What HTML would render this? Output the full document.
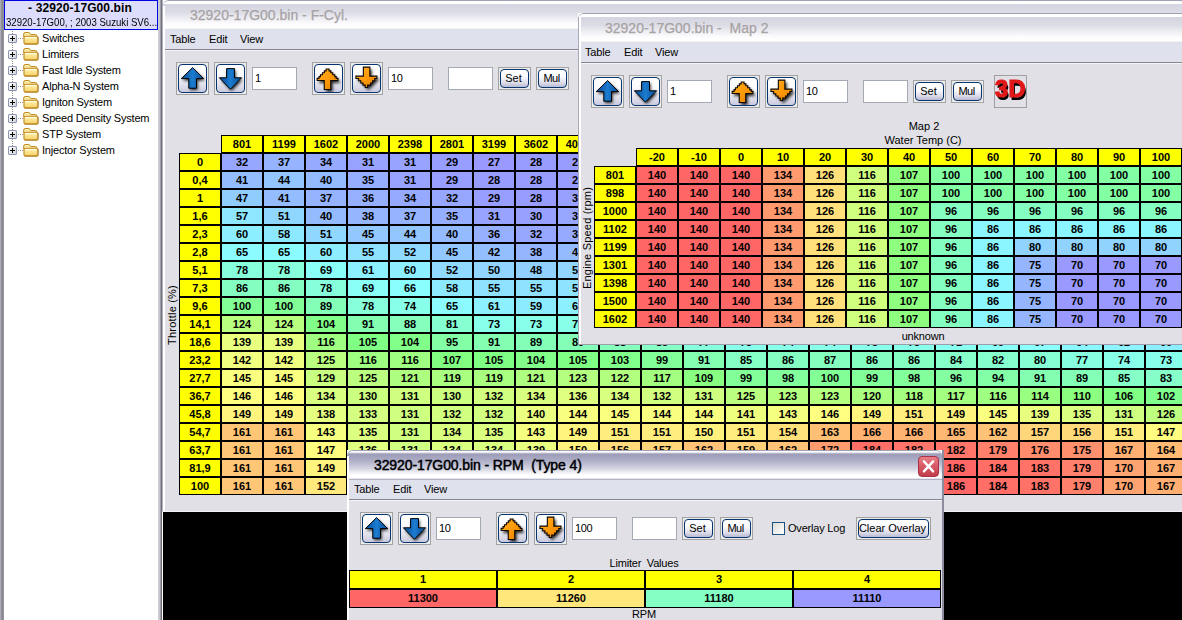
<!DOCTYPE html>
<html><head><meta charset="utf-8"><title>32920-17G00.bin</title>
<style>
html,body{margin:0;padding:0}
body{width:1182px;height:620px;overflow:hidden;position:relative;background:#e4e4ec;font-family:"Liberation Sans",sans-serif;font-size:11px;color:#000}
div,span{box-sizing:border-box}
#left{position:absolute;left:0;top:0;width:163px;height:620px;background:linear-gradient(90deg,#b6b6be 0,#92929c 1.5px,#7e7e8a 3.4px,#fff 4px);background-origin:border-box;border-left:4px solid transparent;}
#left .edge{position:absolute;left:154px;top:0;width:5px;height:620px;background:linear-gradient(90deg,#d0d0d8 0,#c2c2ca 2.3px,#787882 2.7px,#6e6e78 3.8px,#fff 4.1px)}
#hdr{z-index:2;position:absolute;left:0;top:0;width:154px;height:30px;background:#dcdcfc;border:1px solid #0000e0;text-align:center}
#hdr b{position:absolute;left:-1px;width:152px;top:0px;letter-spacing:.1px;font-size:12px;line-height:15px;font-weight:bold;white-space:nowrap}
#hdr i{position:absolute;left:-6px;width:164px;top:15px;font-size:10.5px;transform:scaleX(.915);line-height:13px;font-style:normal;white-space:nowrap}
.ti{position:absolute;left:0;height:16px;width:154px;white-space:nowrap}
.ti .pm{position:absolute;left:4px;top:4px;width:9px;height:9px;border:1px solid #8c98ac;border-radius:1px;background:linear-gradient(135deg,#fff,#d0d0d8)}
.ti .pm:before{content:"";position:absolute;left:1px;top:3px;width:5px;height:1px;background:#000}
.ti .pm:after{content:"";position:absolute;left:3px;top:1px;width:1px;height:5px;background:#000}
.ti .dl{position:absolute;left:14px;top:8px;width:5px;border-top:1px dotted #909090}
.ti .vl{position:absolute;left:8px;top:-3px;height:7px;border-left:1px dotted #909090}
.ti svg{position:absolute;left:19px;top:1px}
.ti .tx{position:absolute;left:38px;top:1px;line-height:15px;font-size:11px;letter-spacing:-.2px}
.win{position:absolute;background:#e1e0e6;overflow:hidden;border-left:1px solid #b0b0c0}
.win:before{content:'';position:absolute;left:0;top:0;width:6px;height:6px;background:#fff}
.win{border-bottom:1px solid #9c9caa}
.win .lw{position:absolute;left:0;top:6px;width:2px;bottom:0;background:#fff;z-index:3}
#fcyl{border-bottom-color:#f2f2f6}
#map2{clip-path:inset(0 0 0 1px)}
#map2 .lw{left:0;width:3px;border-left:1px solid #a8a8b8;top:4px}
#map2:before{left:0}
.win.act{border-right:2px solid #8c8c9e;border-left:0}
.win.act:after{content:'';position:absolute;right:0;top:0;width:6px;height:6px;background:#fff}
.win.act .tb{border-radius:6px 6px 0 0;z-index:1}
.win .tb{position:absolute;left:0;top:0;right:0;height:30px;border-top:1px solid #a0a0b2;border-radius:6px 0 0 0;background:linear-gradient(180deg,#fff 0,#fff 2.5px,#d6d6e2 3.5px,#dcdce6 11px,#fafafc 22px,#fff 25px,#fff 27px,#d4d4e0 29px)}
.win.act .tb{background:linear-gradient(180deg,#fff 0,#fff 1px,#9c9cb8 3px,#acacc6 9px,#d6d6e2 18px,#fff 24px,#fff 27px,#9a9ab6 29px)}
.win .tt{position:absolute;left:27px;top:5px;font-size:14px;line-height:18px;color:#a8a3a4;-webkit-text-stroke:.25px #a8a3a4;white-space:nowrap;letter-spacing:0}
.win.act .tt{color:#000;letter-spacing:-.1px;-webkit-text-stroke:.3px #000;text-shadow:0 0 1px #5a5a7a}
.win .mb{position:absolute;left:1px;top:30px;right:0;height:20px;background:#dfe1ec;border-bottom:1px solid #85858f}
.win .mb span{position:absolute;top:2px;line-height:15px;font-size:11px;letter-spacing:-.15px}
.win .ct{position:absolute;left:0;top:50px;right:0;bottom:0;border-left:2px solid #fff;border-top:1px solid #f4f4f8}
.c{position:absolute;border:1px solid #000;font-weight:bold;font-size:11px;line-height:16px;text-align:center;overflow:hidden;white-space:nowrap}
.bb{position:absolute;width:33px;height:33px;border:1px solid #a2a2a2;background:#ececec;padding:1px}
.bi{width:29px;height:29px;border:1px solid #05346e;border-radius:4px;background:linear-gradient(180deg,#fff 0,#fbfbfd 35%,#e4e4ee 70%,#cacade 100%);position:relative;overflow:hidden}
.ic{position:absolute;left:-1px;top:-1px;width:29px;height:29px}
.inp{position:absolute;width:45px;height:23px;background:#fff;border:1px solid #a4aab4;font-size:11px;line-height:21px;padding-left:2px;letter-spacing:-.4px}
.sb{position:absolute;height:23px;border:1px solid #a2a2a2;background:#ececec;padding:1px}
.si{width:100%;height:19px;border:1px solid #05346e;border-radius:4px;background:linear-gradient(180deg,#fff 0,#fafafd 40%,#dcdcea 75%,#babad2 100%);text-align:center;font-size:11px;line-height:17px;white-space:nowrap;text-indent:-2px}
.lbl{position:absolute;white-space:nowrap;font-size:11px;line-height:13px;text-align:center;letter-spacing:-.2px}
.vlbl{position:absolute;white-space:nowrap;font-size:11px;line-height:13px;letter-spacing:.2px;transform:translate(-50%,-50%) rotate(-90deg)}
.close{position:absolute;right:3px;top:5px;width:21px;height:21px;border-radius:4px;border:1px solid #a83048;background:linear-gradient(180deg,#e88088 0,#d85c66 45%,#c23c4c 100%)}
.close svg{position:absolute;left:-1px;top:-1px}
.d3{position:absolute;left:0;top:0px;width:31px;text-align:center;font-size:23px;line-height:26px;font-weight:bold;color:#e01818;-webkit-text-stroke:1.2px #e01818;text-shadow:1.5px 2.5px 0 #000;transform:scaleX(1.02);letter-spacing:.5px}
.cb{position:absolute;width:13px;height:13px;border:1px solid #1c5180;background:linear-gradient(135deg,#dcdcd7,#fff)}
</style></head>
<body>
<div id="left"><div class="edge"></div><div id="hdr"><b>- 32920-17G00.bin</b><i>32920-17G00, ; 2003 Suzuki SV6...</i></div>
<div class="ti" style="top:30px"><span class="vl"></span><span class="pm"></span><span class="dl"></span><svg width="18" height="15" viewBox="0 0 18 15"><defs><linearGradient id="fg" x1="0" y1="0" x2="0" y2="1"><stop offset="0" stop-color="#fff6bc"/><stop offset="1" stop-color="#f6d062"/></linearGradient></defs><path d="M2 13.5 L13.8 13.5 Q15.7 13.3 15.6 11.3 L15.6 6" stroke="#8c6a1c" stroke-width="1" fill="none" opacity=".55"/><path d="M.7 6 L.7 3 Q.7 1.5 2.2 1.5 L5.4 1.5 Q6.8 1.5 7.4 2.8 L7.9 3.6 L12.6 3.6 Q13.8 3.6 13.8 4.8 L13.8 6 Z" fill="#fbeaa4" stroke="#bf8a22" stroke-width="1"/><rect x="1" y="5.2" width="13.7" height="7.7" rx="1.3" fill="url(#fg)" stroke="#bf8a22" stroke-width="1.1"/><path d="M2.2 6.6 L14 6.6" stroke="#fffce4" stroke-width="1"/></svg><span class="tx">Switches</span></div>
<div class="ti" style="top:46px"><span class="vl"></span><span class="pm"></span><span class="dl"></span><svg width="18" height="15" viewBox="0 0 18 15"><defs><linearGradient id="fg" x1="0" y1="0" x2="0" y2="1"><stop offset="0" stop-color="#fff6bc"/><stop offset="1" stop-color="#f6d062"/></linearGradient></defs><path d="M2 13.5 L13.8 13.5 Q15.7 13.3 15.6 11.3 L15.6 6" stroke="#8c6a1c" stroke-width="1" fill="none" opacity=".55"/><path d="M.7 6 L.7 3 Q.7 1.5 2.2 1.5 L5.4 1.5 Q6.8 1.5 7.4 2.8 L7.9 3.6 L12.6 3.6 Q13.8 3.6 13.8 4.8 L13.8 6 Z" fill="#fbeaa4" stroke="#bf8a22" stroke-width="1"/><rect x="1" y="5.2" width="13.7" height="7.7" rx="1.3" fill="url(#fg)" stroke="#bf8a22" stroke-width="1.1"/><path d="M2.2 6.6 L14 6.6" stroke="#fffce4" stroke-width="1"/></svg><span class="tx">Limiters</span></div>
<div class="ti" style="top:62px"><span class="vl"></span><span class="pm"></span><span class="dl"></span><svg width="18" height="15" viewBox="0 0 18 15"><defs><linearGradient id="fg" x1="0" y1="0" x2="0" y2="1"><stop offset="0" stop-color="#fff6bc"/><stop offset="1" stop-color="#f6d062"/></linearGradient></defs><path d="M2 13.5 L13.8 13.5 Q15.7 13.3 15.6 11.3 L15.6 6" stroke="#8c6a1c" stroke-width="1" fill="none" opacity=".55"/><path d="M.7 6 L.7 3 Q.7 1.5 2.2 1.5 L5.4 1.5 Q6.8 1.5 7.4 2.8 L7.9 3.6 L12.6 3.6 Q13.8 3.6 13.8 4.8 L13.8 6 Z" fill="#fbeaa4" stroke="#bf8a22" stroke-width="1"/><rect x="1" y="5.2" width="13.7" height="7.7" rx="1.3" fill="url(#fg)" stroke="#bf8a22" stroke-width="1.1"/><path d="M2.2 6.6 L14 6.6" stroke="#fffce4" stroke-width="1"/></svg><span class="tx">Fast Idle System</span></div>
<div class="ti" style="top:78px"><span class="vl"></span><span class="pm"></span><span class="dl"></span><svg width="18" height="15" viewBox="0 0 18 15"><defs><linearGradient id="fg" x1="0" y1="0" x2="0" y2="1"><stop offset="0" stop-color="#fff6bc"/><stop offset="1" stop-color="#f6d062"/></linearGradient></defs><path d="M2 13.5 L13.8 13.5 Q15.7 13.3 15.6 11.3 L15.6 6" stroke="#8c6a1c" stroke-width="1" fill="none" opacity=".55"/><path d="M.7 6 L.7 3 Q.7 1.5 2.2 1.5 L5.4 1.5 Q6.8 1.5 7.4 2.8 L7.9 3.6 L12.6 3.6 Q13.8 3.6 13.8 4.8 L13.8 6 Z" fill="#fbeaa4" stroke="#bf8a22" stroke-width="1"/><rect x="1" y="5.2" width="13.7" height="7.7" rx="1.3" fill="url(#fg)" stroke="#bf8a22" stroke-width="1.1"/><path d="M2.2 6.6 L14 6.6" stroke="#fffce4" stroke-width="1"/></svg><span class="tx">Alpha-N System</span></div>
<div class="ti" style="top:94px"><span class="vl"></span><span class="pm"></span><span class="dl"></span><svg width="18" height="15" viewBox="0 0 18 15"><defs><linearGradient id="fg" x1="0" y1="0" x2="0" y2="1"><stop offset="0" stop-color="#fff6bc"/><stop offset="1" stop-color="#f6d062"/></linearGradient></defs><path d="M2 13.5 L13.8 13.5 Q15.7 13.3 15.6 11.3 L15.6 6" stroke="#8c6a1c" stroke-width="1" fill="none" opacity=".55"/><path d="M.7 6 L.7 3 Q.7 1.5 2.2 1.5 L5.4 1.5 Q6.8 1.5 7.4 2.8 L7.9 3.6 L12.6 3.6 Q13.8 3.6 13.8 4.8 L13.8 6 Z" fill="#fbeaa4" stroke="#bf8a22" stroke-width="1"/><rect x="1" y="5.2" width="13.7" height="7.7" rx="1.3" fill="url(#fg)" stroke="#bf8a22" stroke-width="1.1"/><path d="M2.2 6.6 L14 6.6" stroke="#fffce4" stroke-width="1"/></svg><span class="tx">Igniton System</span></div>
<div class="ti" style="top:110px"><span class="vl"></span><span class="pm"></span><span class="dl"></span><svg width="18" height="15" viewBox="0 0 18 15"><defs><linearGradient id="fg" x1="0" y1="0" x2="0" y2="1"><stop offset="0" stop-color="#fff6bc"/><stop offset="1" stop-color="#f6d062"/></linearGradient></defs><path d="M2 13.5 L13.8 13.5 Q15.7 13.3 15.6 11.3 L15.6 6" stroke="#8c6a1c" stroke-width="1" fill="none" opacity=".55"/><path d="M.7 6 L.7 3 Q.7 1.5 2.2 1.5 L5.4 1.5 Q6.8 1.5 7.4 2.8 L7.9 3.6 L12.6 3.6 Q13.8 3.6 13.8 4.8 L13.8 6 Z" fill="#fbeaa4" stroke="#bf8a22" stroke-width="1"/><rect x="1" y="5.2" width="13.7" height="7.7" rx="1.3" fill="url(#fg)" stroke="#bf8a22" stroke-width="1.1"/><path d="M2.2 6.6 L14 6.6" stroke="#fffce4" stroke-width="1"/></svg><span class="tx">Speed Density System</span></div>
<div class="ti" style="top:126px"><span class="vl"></span><span class="pm"></span><span class="dl"></span><svg width="18" height="15" viewBox="0 0 18 15"><defs><linearGradient id="fg" x1="0" y1="0" x2="0" y2="1"><stop offset="0" stop-color="#fff6bc"/><stop offset="1" stop-color="#f6d062"/></linearGradient></defs><path d="M2 13.5 L13.8 13.5 Q15.7 13.3 15.6 11.3 L15.6 6" stroke="#8c6a1c" stroke-width="1" fill="none" opacity=".55"/><path d="M.7 6 L.7 3 Q.7 1.5 2.2 1.5 L5.4 1.5 Q6.8 1.5 7.4 2.8 L7.9 3.6 L12.6 3.6 Q13.8 3.6 13.8 4.8 L13.8 6 Z" fill="#fbeaa4" stroke="#bf8a22" stroke-width="1"/><rect x="1" y="5.2" width="13.7" height="7.7" rx="1.3" fill="url(#fg)" stroke="#bf8a22" stroke-width="1.1"/><path d="M2.2 6.6 L14 6.6" stroke="#fffce4" stroke-width="1"/></svg><span class="tx">STP System</span></div>
<div class="ti" style="top:142px"><span class="vl"></span><span class="pm"></span><span class="dl"></span><svg width="18" height="15" viewBox="0 0 18 15"><defs><linearGradient id="fg" x1="0" y1="0" x2="0" y2="1"><stop offset="0" stop-color="#fff6bc"/><stop offset="1" stop-color="#f6d062"/></linearGradient></defs><path d="M2 13.5 L13.8 13.5 Q15.7 13.3 15.6 11.3 L15.6 6" stroke="#8c6a1c" stroke-width="1" fill="none" opacity=".55"/><path d="M.7 6 L.7 3 Q.7 1.5 2.2 1.5 L5.4 1.5 Q6.8 1.5 7.4 2.8 L7.9 3.6 L12.6 3.6 Q13.8 3.6 13.8 4.8 L13.8 6 Z" fill="#fbeaa4" stroke="#bf8a22" stroke-width="1"/><rect x="1" y="5.2" width="13.7" height="7.7" rx="1.3" fill="url(#fg)" stroke="#bf8a22" stroke-width="1.1"/><path d="M2.2 6.6 L14 6.6" stroke="#fffce4" stroke-width="1"/></svg><span class="tx">Injector System</span></div>
</div>
<div class="win" id="fcyl" style="left:162px;top:0px;width:1030px;height:512px">
<div class="tb"><span class="tt">32920-17G00.bin - F-Cyl.</span></div>
<div class="mb"><span style="left:6px">Table</span><span style="left:45px">Edit</span><span style="left:76px">View</span></div>
<div class="ct"></div><div class="lw"></div>
<div class="bb" style="left:13px;top:62px"><div class="bi"><svg class="ic" viewBox="0 0 29 29"><defs><linearGradient id="gb" x1="0" y1="0" x2="1" y2="0"><stop offset="0" stop-color="#084a94"/><stop offset=".5" stop-color="#1c7ccf"/><stop offset="1" stop-color="#084a94"/></linearGradient><filter id="sh" x="-30%" y="-30%" width="170%" height="170%"><feGaussianBlur stdDeviation="1.7"/></filter></defs><path d="M15.6 5.6 L27 16.6 L19.6 16.6 L19.6 26 L11.9 26 L11.9 16.6 L4.4 16.6 Z" fill="#000" opacity=".85" filter="url(#sh)"/><path d="M14.6 3.6 L25.7 14.6 L18.5 14.6 L18.5 24.2 L10.8 24.2 L10.8 14.6 L3.3 14.6 Z" fill="url(#gb)" stroke="#000" stroke-width="1" stroke-linejoin="round"/></svg></div></div>
<div class="bb" style="left:51px;top:62px"><div class="bi"><svg class="ic" viewBox="0 0 29 29"><path d="M11.6 6.4 L19.6 6.4 L19.6 15.6 L26.8 15.6 L15.6 27 L4.6 15.6 L11.6 15.6 Z" fill="#000" opacity=".85" filter="url(#sh)"/><path d="M10.6 4.6 L18.5 4.6 L18.5 13.8 L25.6 13.8 L14.4 25.2 L3.4 13.8 L10.6 13.8 Z" fill="url(#gb)" stroke="#000" stroke-width="1" stroke-linejoin="round"/></svg></div></div>
<div class="bb" style="left:149px;top:62px"><div class="bi"><svg class="ic" viewBox="0 0 29 29"><defs><linearGradient id="go" x1="0" y1="0" x2="1" y2="1"><stop offset="0" stop-color="#ffb020"/><stop offset=".5" stop-color="#ff9a08"/><stop offset="1" stop-color="#e08000"/></linearGradient></defs><path d="M12.15 4.95 L15.05 4.95 L15.05 6.85 L16.85 6.85 L16.85 8.75 L18.75 8.75 L18.75 10.75 L20.75 10.75 L20.75 12.65 L22.15 12.65 L22.15 14.35 L23.95 14.35 L23.95 16.55 L16.75 16.55 L16.75 25.55 L10.25 25.55 L10.25 16.55 L3.15 16.55 L3.15 14.35 L5.05 14.35 L5.05 12.65 L6.45 12.65 L6.45 10.75 L8.45 10.75 L8.45 8.75 L10.35 8.75 L10.35 6.85 L12.15 6.85 Z" transform="translate(1.9,2.4)" fill="#000" opacity=".85" filter="url(#sh)"/><path d="M12.15 4.95 L15.05 4.95 L15.05 6.85 L16.85 6.85 L16.85 8.75 L18.75 8.75 L18.75 10.75 L20.75 10.75 L20.75 12.65 L22.15 12.65 L22.15 14.35 L23.95 14.35 L23.95 16.55 L16.75 16.55 L16.75 25.55 L10.25 25.55 L10.25 16.55 L3.15 16.55 L3.15 14.35 L5.05 14.35 L5.05 12.65 L6.45 12.65 L6.45 10.75 L8.45 10.75 L8.45 8.75 L10.35 8.75 L10.35 6.85 L12.15 6.85 Z" fill="url(#go)" stroke="#0c0600" stroke-width="1.1" stroke-linejoin="miter"/></svg></div></div>
<div class="bb" style="left:187px;top:62px"><div class="bi"><svg class="ic" viewBox="0 0 29 29"><path d="M11.35 3.15 L17.85 3.15 L17.85 12.15 L24.95 12.15 L24.95 14.55 L22.75 14.55 L22.75 16.75 L20.55 16.75 L20.55 18.95 L18.65 18.95 L18.65 21.15 L15.65 21.15 L15.65 23.55 L13.25 23.55 L13.25 21.15 L11.05 21.15 L11.05 18.95 L8.85 18.95 L8.85 16.75 L6.65 16.75 L6.65 14.55 L3.95 14.55 L3.95 12.15 L11.35 12.15 Z" transform="translate(1.9,2.4)" fill="#000" opacity=".85" filter="url(#sh)"/><path d="M11.35 3.15 L17.85 3.15 L17.85 12.15 L24.95 12.15 L24.95 14.55 L22.75 14.55 L22.75 16.75 L20.55 16.75 L20.55 18.95 L18.65 18.95 L18.65 21.15 L15.65 21.15 L15.65 23.55 L13.25 23.55 L13.25 21.15 L11.05 21.15 L11.05 18.95 L8.85 18.95 L8.85 16.75 L6.65 16.75 L6.65 14.55 L3.95 14.55 L3.95 12.15 L11.35 12.15 Z" fill="url(#go)" stroke="#0c0600" stroke-width="1.1" stroke-linejoin="miter"/></svg></div></div>
<div class="inp" style="left:89px;top:67px">1</div>
<div class="inp" style="left:225px;top:67px">10</div>
<div class="inp" style="left:285px;top:67px"></div>
<div class="sb" style="left:335px;top:67px;width:33px"><div class="si">Set</div></div>
<div class="sb" style="left:373px;top:67px;width:33px"><div class="si" style="letter-spacing:-.5px">Mul</div></div>

<div class="c" style="left:58px;top:135px;width:42px;height:18px;background:#ffff00">801</div>
<div class="c" style="left:100px;top:135px;width:42px;height:18px;background:#ffff00">1199</div>
<div class="c" style="left:142px;top:135px;width:42px;height:18px;background:#ffff00">1602</div>
<div class="c" style="left:184px;top:135px;width:42px;height:18px;background:#ffff00">2000</div>
<div class="c" style="left:226px;top:135px;width:42px;height:18px;background:#ffff00">2398</div>
<div class="c" style="left:268px;top:135px;width:42px;height:18px;background:#ffff00">2801</div>
<div class="c" style="left:310px;top:135px;width:42px;height:18px;background:#ffff00">3199</div>
<div class="c" style="left:352px;top:135px;width:42px;height:18px;background:#ffff00">3602</div>
<div class="c" style="left:394px;top:135px;width:42px;height:18px;background:#ffff00">4000</div>
<div class="c" style="left:436px;top:135px;width:42px;height:18px;background:#ffff00">4398</div>
<div class="c" style="left:478px;top:135px;width:42px;height:18px;background:#ffff00">4801</div>
<div class="c" style="left:520px;top:135px;width:42px;height:18px;background:#ffff00">5199</div>
<div class="c" style="left:562px;top:135px;width:42px;height:18px;background:#ffff00">5602</div>
<div class="c" style="left:604px;top:135px;width:42px;height:18px;background:#ffff00">6000</div>
<div class="c" style="left:646px;top:135px;width:42px;height:18px;background:#ffff00">6398</div>
<div class="c" style="left:688px;top:135px;width:42px;height:18px;background:#ffff00">6801</div>
<div class="c" style="left:730px;top:135px;width:42px;height:18px;background:#ffff00">7199</div>
<div class="c" style="left:772px;top:135px;width:42px;height:18px;background:#ffff00">7602</div>
<div class="c" style="left:814px;top:135px;width:42px;height:18px;background:#ffff00">8000</div>
<div class="c" style="left:856px;top:135px;width:42px;height:18px;background:#ffff00">8398</div>
<div class="c" style="left:898px;top:135px;width:42px;height:18px;background:#ffff00">8801</div>
<div class="c" style="left:940px;top:135px;width:42px;height:18px;background:#ffff00">9199</div>
<div class="c" style="left:982px;top:135px;width:42px;height:18px;background:#ffff00">9602</div>
<div class="c" style="left:16px;top:153px;width:42px;height:18px;background:#ffff00">0</div>
<div class="c" style="left:58px;top:153px;width:42px;height:18px;background:#97a6ff">32</div>
<div class="c" style="left:100px;top:153px;width:42px;height:18px;background:#95b3ff">37</div>
<div class="c" style="left:142px;top:153px;width:42px;height:18px;background:#96abff">34</div>
<div class="c" style="left:184px;top:153px;width:42px;height:18px;background:#97a3ff">31</div>
<div class="c" style="left:226px;top:153px;width:42px;height:18px;background:#97a3ff">31</div>
<div class="c" style="left:268px;top:153px;width:42px;height:18px;background:#989eff">29</div>
<div class="c" style="left:310px;top:153px;width:42px;height:18px;background:#9999ff">27</div>
<div class="c" style="left:352px;top:153px;width:42px;height:18px;background:#999cff">28</div>
<div class="c" style="left:394px;top:153px;width:42px;height:18px;background:#999cff">28</div>
<div class="c" style="left:436px;top:153px;width:42px;height:18px;background:#999cff">28</div>
<div class="c" style="left:478px;top:153px;width:42px;height:18px;background:#999cff">28</div>
<div class="c" style="left:520px;top:153px;width:42px;height:18px;background:#9999ff">27</div>
<div class="c" style="left:562px;top:153px;width:42px;height:18px;background:#9999ff">27</div>
<div class="c" style="left:604px;top:153px;width:42px;height:18px;background:#9999ff">27</div>
<div class="c" style="left:646px;top:153px;width:42px;height:18px;background:#9999ff">27</div>
<div class="c" style="left:688px;top:153px;width:42px;height:18px;background:#9999ff">27</div>
<div class="c" style="left:730px;top:153px;width:42px;height:18px;background:#9999ff">27</div>
<div class="c" style="left:772px;top:153px;width:42px;height:18px;background:#9999ff">27</div>
<div class="c" style="left:814px;top:153px;width:42px;height:18px;background:#9999ff">27</div>
<div class="c" style="left:856px;top:153px;width:42px;height:18px;background:#9999ff">27</div>
<div class="c" style="left:898px;top:153px;width:42px;height:18px;background:#9999ff">27</div>
<div class="c" style="left:940px;top:153px;width:42px;height:18px;background:#9999ff">27</div>
<div class="c" style="left:982px;top:153px;width:42px;height:18px;background:#9999ff">27</div>
<div class="c" style="left:16px;top:171px;width:42px;height:18px;background:#ffff00">0,4</div>
<div class="c" style="left:58px;top:171px;width:42px;height:18px;background:#94bdff">41</div>
<div class="c" style="left:100px;top:171px;width:42px;height:18px;background:#93c5ff">44</div>
<div class="c" style="left:142px;top:171px;width:42px;height:18px;background:#94baff">40</div>
<div class="c" style="left:184px;top:171px;width:42px;height:18px;background:#96aeff">35</div>
<div class="c" style="left:226px;top:171px;width:42px;height:18px;background:#97a3ff">31</div>
<div class="c" style="left:268px;top:171px;width:42px;height:18px;background:#989eff">29</div>
<div class="c" style="left:310px;top:171px;width:42px;height:18px;background:#999cff">28</div>
<div class="c" style="left:352px;top:171px;width:42px;height:18px;background:#999cff">28</div>
<div class="c" style="left:394px;top:171px;width:42px;height:18px;background:#999cff">28</div>
<div class="c" style="left:436px;top:171px;width:42px;height:18px;background:#999cff">28</div>
<div class="c" style="left:478px;top:171px;width:42px;height:18px;background:#999cff">28</div>
<div class="c" style="left:520px;top:171px;width:42px;height:18px;background:#999cff">28</div>
<div class="c" style="left:562px;top:171px;width:42px;height:18px;background:#9999ff">27</div>
<div class="c" style="left:604px;top:171px;width:42px;height:18px;background:#9999ff">27</div>
<div class="c" style="left:646px;top:171px;width:42px;height:18px;background:#9999ff">27</div>
<div class="c" style="left:688px;top:171px;width:42px;height:18px;background:#9999ff">27</div>
<div class="c" style="left:730px;top:171px;width:42px;height:18px;background:#9999ff">27</div>
<div class="c" style="left:772px;top:171px;width:42px;height:18px;background:#9999ff">27</div>
<div class="c" style="left:814px;top:171px;width:42px;height:18px;background:#9999ff">27</div>
<div class="c" style="left:856px;top:171px;width:42px;height:18px;background:#9999ff">27</div>
<div class="c" style="left:898px;top:171px;width:42px;height:18px;background:#9999ff">27</div>
<div class="c" style="left:940px;top:171px;width:42px;height:18px;background:#9999ff">27</div>
<div class="c" style="left:982px;top:171px;width:42px;height:18px;background:#9999ff">27</div>
<div class="c" style="left:16px;top:189px;width:42px;height:18px;background:#ffff00">1</div>
<div class="c" style="left:58px;top:189px;width:42px;height:18px;background:#91ccff">47</div>
<div class="c" style="left:100px;top:189px;width:42px;height:18px;background:#94bdff">41</div>
<div class="c" style="left:142px;top:189px;width:42px;height:18px;background:#95b3ff">37</div>
<div class="c" style="left:184px;top:189px;width:42px;height:18px;background:#96b0ff">36</div>
<div class="c" style="left:226px;top:189px;width:42px;height:18px;background:#96abff">34</div>
<div class="c" style="left:268px;top:189px;width:42px;height:18px;background:#97a6ff">32</div>
<div class="c" style="left:310px;top:189px;width:42px;height:18px;background:#989eff">29</div>
<div class="c" style="left:352px;top:189px;width:42px;height:18px;background:#999cff">28</div>
<div class="c" style="left:394px;top:189px;width:42px;height:18px;background:#98a1ff">30</div>
<div class="c" style="left:436px;top:189px;width:42px;height:18px;background:#98a1ff">30</div>
<div class="c" style="left:478px;top:189px;width:42px;height:18px;background:#989eff">29</div>
<div class="c" style="left:520px;top:189px;width:42px;height:18px;background:#999cff">28</div>
<div class="c" style="left:562px;top:189px;width:42px;height:18px;background:#999cff">28</div>
<div class="c" style="left:604px;top:189px;width:42px;height:18px;background:#999cff">28</div>
<div class="c" style="left:646px;top:189px;width:42px;height:18px;background:#999cff">28</div>
<div class="c" style="left:688px;top:189px;width:42px;height:18px;background:#999cff">28</div>
<div class="c" style="left:730px;top:189px;width:42px;height:18px;background:#999cff">28</div>
<div class="c" style="left:772px;top:189px;width:42px;height:18px;background:#999cff">28</div>
<div class="c" style="left:814px;top:189px;width:42px;height:18px;background:#999cff">28</div>
<div class="c" style="left:856px;top:189px;width:42px;height:18px;background:#999cff">28</div>
<div class="c" style="left:898px;top:189px;width:42px;height:18px;background:#999cff">28</div>
<div class="c" style="left:940px;top:189px;width:42px;height:18px;background:#999cff">28</div>
<div class="c" style="left:982px;top:189px;width:42px;height:18px;background:#999cff">28</div>
<div class="c" style="left:16px;top:207px;width:42px;height:18px;background:#ffff00">1,6</div>
<div class="c" style="left:58px;top:207px;width:42px;height:18px;background:#8ee6ff">57</div>
<div class="c" style="left:100px;top:207px;width:42px;height:18px;background:#90d7ff">51</div>
<div class="c" style="left:142px;top:207px;width:42px;height:18px;background:#94baff">40</div>
<div class="c" style="left:184px;top:207px;width:42px;height:18px;background:#95b5ff">38</div>
<div class="c" style="left:226px;top:207px;width:42px;height:18px;background:#95b3ff">37</div>
<div class="c" style="left:268px;top:207px;width:42px;height:18px;background:#96aeff">35</div>
<div class="c" style="left:310px;top:207px;width:42px;height:18px;background:#97a3ff">31</div>
<div class="c" style="left:352px;top:207px;width:42px;height:18px;background:#98a1ff">30</div>
<div class="c" style="left:394px;top:207px;width:42px;height:18px;background:#97a6ff">32</div>
<div class="c" style="left:436px;top:207px;width:42px;height:18px;background:#97a6ff">32</div>
<div class="c" style="left:478px;top:207px;width:42px;height:18px;background:#97a3ff">31</div>
<div class="c" style="left:520px;top:207px;width:42px;height:18px;background:#98a1ff">30</div>
<div class="c" style="left:562px;top:207px;width:42px;height:18px;background:#989eff">29</div>
<div class="c" style="left:604px;top:207px;width:42px;height:18px;background:#989eff">29</div>
<div class="c" style="left:646px;top:207px;width:42px;height:18px;background:#989eff">29</div>
<div class="c" style="left:688px;top:207px;width:42px;height:18px;background:#989eff">29</div>
<div class="c" style="left:730px;top:207px;width:42px;height:18px;background:#989eff">29</div>
<div class="c" style="left:772px;top:207px;width:42px;height:18px;background:#989eff">29</div>
<div class="c" style="left:814px;top:207px;width:42px;height:18px;background:#989eff">29</div>
<div class="c" style="left:856px;top:207px;width:42px;height:18px;background:#989eff">29</div>
<div class="c" style="left:898px;top:207px;width:42px;height:18px;background:#989eff">29</div>
<div class="c" style="left:940px;top:207px;width:42px;height:18px;background:#989eff">29</div>
<div class="c" style="left:982px;top:207px;width:42px;height:18px;background:#989eff">29</div>
<div class="c" style="left:16px;top:225px;width:42px;height:18px;background:#ffff00">2,3</div>
<div class="c" style="left:58px;top:225px;width:42px;height:18px;background:#8deeff">60</div>
<div class="c" style="left:100px;top:225px;width:42px;height:18px;background:#8de9ff">58</div>
<div class="c" style="left:142px;top:225px;width:42px;height:18px;background:#90d7ff">51</div>
<div class="c" style="left:184px;top:225px;width:42px;height:18px;background:#92c7ff">45</div>
<div class="c" style="left:226px;top:225px;width:42px;height:18px;background:#93c5ff">44</div>
<div class="c" style="left:268px;top:225px;width:42px;height:18px;background:#94baff">40</div>
<div class="c" style="left:310px;top:225px;width:42px;height:18px;background:#96b0ff">36</div>
<div class="c" style="left:352px;top:225px;width:42px;height:18px;background:#97a6ff">32</div>
<div class="c" style="left:394px;top:225px;width:42px;height:18px;background:#96abff">34</div>
<div class="c" style="left:436px;top:225px;width:42px;height:18px;background:#96abff">34</div>
<div class="c" style="left:478px;top:225px;width:42px;height:18px;background:#97a8ff">33</div>
<div class="c" style="left:520px;top:225px;width:42px;height:18px;background:#97a6ff">32</div>
<div class="c" style="left:562px;top:225px;width:42px;height:18px;background:#97a3ff">31</div>
<div class="c" style="left:604px;top:225px;width:42px;height:18px;background:#97a3ff">31</div>
<div class="c" style="left:646px;top:225px;width:42px;height:18px;background:#97a3ff">31</div>
<div class="c" style="left:688px;top:225px;width:42px;height:18px;background:#97a3ff">31</div>
<div class="c" style="left:730px;top:225px;width:42px;height:18px;background:#97a3ff">31</div>
<div class="c" style="left:772px;top:225px;width:42px;height:18px;background:#98a1ff">30</div>
<div class="c" style="left:814px;top:225px;width:42px;height:18px;background:#98a1ff">30</div>
<div class="c" style="left:856px;top:225px;width:42px;height:18px;background:#98a1ff">30</div>
<div class="c" style="left:898px;top:225px;width:42px;height:18px;background:#98a1ff">30</div>
<div class="c" style="left:940px;top:225px;width:42px;height:18px;background:#98a1ff">30</div>
<div class="c" style="left:982px;top:225px;width:42px;height:18px;background:#98a1ff">30</div>
<div class="c" style="left:16px;top:243px;width:42px;height:18px;background:#ffff00">2,8</div>
<div class="c" style="left:58px;top:243px;width:42px;height:18px;background:#8bfbff">65</div>
<div class="c" style="left:100px;top:243px;width:42px;height:18px;background:#8bfbff">65</div>
<div class="c" style="left:142px;top:243px;width:42px;height:18px;background:#8deeff">60</div>
<div class="c" style="left:184px;top:243px;width:42px;height:18px;background:#8ee1ff">55</div>
<div class="c" style="left:226px;top:243px;width:42px;height:18px;background:#90d9ff">52</div>
<div class="c" style="left:268px;top:243px;width:42px;height:18px;background:#92c7ff">45</div>
<div class="c" style="left:310px;top:243px;width:42px;height:18px;background:#93bfff">42</div>
<div class="c" style="left:352px;top:243px;width:42px;height:18px;background:#95b5ff">38</div>
<div class="c" style="left:394px;top:243px;width:42px;height:18px;background:#94baff">40</div>
<div class="c" style="left:436px;top:243px;width:42px;height:18px;background:#94baff">40</div>
<div class="c" style="left:478px;top:243px;width:42px;height:18px;background:#95b5ff">38</div>
<div class="c" style="left:520px;top:243px;width:42px;height:18px;background:#96b0ff">36</div>
<div class="c" style="left:562px;top:243px;width:42px;height:18px;background:#96abff">34</div>
<div class="c" style="left:604px;top:243px;width:42px;height:18px;background:#96abff">34</div>
<div class="c" style="left:646px;top:243px;width:42px;height:18px;background:#96abff">34</div>
<div class="c" style="left:688px;top:243px;width:42px;height:18px;background:#96abff">34</div>
<div class="c" style="left:730px;top:243px;width:42px;height:18px;background:#96abff">34</div>
<div class="c" style="left:772px;top:243px;width:42px;height:18px;background:#97a8ff">33</div>
<div class="c" style="left:814px;top:243px;width:42px;height:18px;background:#97a8ff">33</div>
<div class="c" style="left:856px;top:243px;width:42px;height:18px;background:#97a6ff">32</div>
<div class="c" style="left:898px;top:243px;width:42px;height:18px;background:#97a6ff">32</div>
<div class="c" style="left:940px;top:243px;width:42px;height:18px;background:#97a6ff">32</div>
<div class="c" style="left:982px;top:243px;width:42px;height:18px;background:#97a6ff">32</div>
<div class="c" style="left:16px;top:261px;width:42px;height:18px;background:#ffff00">5,1</div>
<div class="c" style="left:58px;top:261px;width:42px;height:18px;background:#87ffdb">78</div>
<div class="c" style="left:100px;top:261px;width:42px;height:18px;background:#87ffdb">78</div>
<div class="c" style="left:142px;top:261px;width:42px;height:18px;background:#89fff8">69</div>
<div class="c" style="left:184px;top:261px;width:42px;height:18px;background:#8cf0ff">61</div>
<div class="c" style="left:226px;top:261px;width:42px;height:18px;background:#8deeff">60</div>
<div class="c" style="left:268px;top:261px;width:42px;height:18px;background:#90d9ff">52</div>
<div class="c" style="left:310px;top:261px;width:42px;height:18px;background:#90d4ff">50</div>
<div class="c" style="left:352px;top:261px;width:42px;height:18px;background:#91cfff">48</div>
<div class="c" style="left:394px;top:261px;width:42px;height:18px;background:#90d4ff">50</div>
<div class="c" style="left:436px;top:261px;width:42px;height:18px;background:#91d1ff">49</div>
<div class="c" style="left:478px;top:261px;width:42px;height:18px;background:#91ccff">47</div>
<div class="c" style="left:520px;top:261px;width:42px;height:18px;background:#93c5ff">44</div>
<div class="c" style="left:562px;top:261px;width:42px;height:18px;background:#93bfff">42</div>
<div class="c" style="left:604px;top:261px;width:42px;height:18px;background:#93bfff">42</div>
<div class="c" style="left:646px;top:261px;width:42px;height:18px;background:#93bfff">42</div>
<div class="c" style="left:688px;top:261px;width:42px;height:18px;background:#93bfff">42</div>
<div class="c" style="left:730px;top:261px;width:42px;height:18px;background:#93bfff">42</div>
<div class="c" style="left:772px;top:261px;width:42px;height:18px;background:#94bdff">41</div>
<div class="c" style="left:814px;top:261px;width:42px;height:18px;background:#94baff">40</div>
<div class="c" style="left:856px;top:261px;width:42px;height:18px;background:#94b8ff">39</div>
<div class="c" style="left:898px;top:261px;width:42px;height:18px;background:#95b5ff">38</div>
<div class="c" style="left:940px;top:261px;width:42px;height:18px;background:#95b3ff">37</div>
<div class="c" style="left:982px;top:261px;width:42px;height:18px;background:#96b0ff">36</div>
<div class="c" style="left:16px;top:279px;width:42px;height:18px;background:#ffff00">7,3</div>
<div class="c" style="left:58px;top:279px;width:42px;height:18px;background:#85ffc1">86</div>
<div class="c" style="left:100px;top:279px;width:42px;height:18px;background:#85ffc1">86</div>
<div class="c" style="left:142px;top:279px;width:42px;height:18px;background:#87ffdb">78</div>
<div class="c" style="left:184px;top:279px;width:42px;height:18px;background:#89fff8">69</div>
<div class="c" style="left:226px;top:279px;width:42px;height:18px;background:#8afdff">66</div>
<div class="c" style="left:268px;top:279px;width:42px;height:18px;background:#8de9ff">58</div>
<div class="c" style="left:310px;top:279px;width:42px;height:18px;background:#8ee1ff">55</div>
<div class="c" style="left:352px;top:279px;width:42px;height:18px;background:#8ee1ff">55</div>
<div class="c" style="left:394px;top:279px;width:42px;height:18px;background:#8ee3ff">56</div>
<div class="c" style="left:436px;top:279px;width:42px;height:18px;background:#8ee1ff">55</div>
<div class="c" style="left:478px;top:279px;width:42px;height:18px;background:#8fdcff">53</div>
<div class="c" style="left:520px;top:279px;width:42px;height:18px;background:#90d4ff">50</div>
<div class="c" style="left:562px;top:279px;width:42px;height:18px;background:#91ccff">47</div>
<div class="c" style="left:604px;top:279px;width:42px;height:18px;background:#91ccff">47</div>
<div class="c" style="left:646px;top:279px;width:42px;height:18px;background:#91ccff">47</div>
<div class="c" style="left:688px;top:279px;width:42px;height:18px;background:#91ccff">47</div>
<div class="c" style="left:730px;top:279px;width:42px;height:18px;background:#91ccff">47</div>
<div class="c" style="left:772px;top:279px;width:42px;height:18px;background:#92caff">46</div>
<div class="c" style="left:814px;top:279px;width:42px;height:18px;background:#92c7ff">45</div>
<div class="c" style="left:856px;top:279px;width:42px;height:18px;background:#93c5ff">44</div>
<div class="c" style="left:898px;top:279px;width:42px;height:18px;background:#93bfff">42</div>
<div class="c" style="left:940px;top:279px;width:42px;height:18px;background:#94bdff">41</div>
<div class="c" style="left:982px;top:279px;width:42px;height:18px;background:#94baff">40</div>
<div class="c" style="left:16px;top:297px;width:42px;height:18px;background:#ffff00">9,6</div>
<div class="c" style="left:58px;top:297px;width:42px;height:18px;background:#82ff95">100</div>
<div class="c" style="left:100px;top:297px;width:42px;height:18px;background:#82ff95">100</div>
<div class="c" style="left:142px;top:297px;width:42px;height:18px;background:#84ffb8">89</div>
<div class="c" style="left:184px;top:297px;width:42px;height:18px;background:#87ffdb">78</div>
<div class="c" style="left:226px;top:297px;width:42px;height:18px;background:#88ffe8">74</div>
<div class="c" style="left:268px;top:297px;width:42px;height:18px;background:#8bfbff">65</div>
<div class="c" style="left:310px;top:297px;width:42px;height:18px;background:#8cf0ff">61</div>
<div class="c" style="left:352px;top:297px;width:42px;height:18px;background:#8debff">59</div>
<div class="c" style="left:394px;top:297px;width:42px;height:18px;background:#8cf0ff">61</div>
<div class="c" style="left:436px;top:297px;width:42px;height:18px;background:#8deeff">60</div>
<div class="c" style="left:478px;top:297px;width:42px;height:18px;background:#8de9ff">58</div>
<div class="c" style="left:520px;top:297px;width:42px;height:18px;background:#8fdeff">54</div>
<div class="c" style="left:562px;top:297px;width:42px;height:18px;background:#90d7ff">51</div>
<div class="c" style="left:604px;top:297px;width:42px;height:18px;background:#90d7ff">51</div>
<div class="c" style="left:646px;top:297px;width:42px;height:18px;background:#90d9ff">52</div>
<div class="c" style="left:688px;top:297px;width:42px;height:18px;background:#90d7ff">51</div>
<div class="c" style="left:730px;top:297px;width:42px;height:18px;background:#90d7ff">51</div>
<div class="c" style="left:772px;top:297px;width:42px;height:18px;background:#90d4ff">50</div>
<div class="c" style="left:814px;top:297px;width:42px;height:18px;background:#91d1ff">49</div>
<div class="c" style="left:856px;top:297px;width:42px;height:18px;background:#91cfff">48</div>
<div class="c" style="left:898px;top:297px;width:42px;height:18px;background:#92caff">46</div>
<div class="c" style="left:940px;top:297px;width:42px;height:18px;background:#93c5ff">44</div>
<div class="c" style="left:982px;top:297px;width:42px;height:18px;background:#93c2ff">43</div>
<div class="c" style="left:16px;top:315px;width:42px;height:18px;background:#ffff00">14,1</div>
<div class="c" style="left:58px;top:315px;width:42px;height:18px;background:#b8ff80">124</div>
<div class="c" style="left:100px;top:315px;width:42px;height:18px;background:#b8ff80">124</div>
<div class="c" style="left:142px;top:315px;width:42px;height:18px;background:#81ff88">104</div>
<div class="c" style="left:184px;top:315px;width:42px;height:18px;background:#84ffb2">91</div>
<div class="c" style="left:226px;top:315px;width:42px;height:18px;background:#85ffbb">88</div>
<div class="c" style="left:268px;top:315px;width:42px;height:18px;background:#86ffd1">81</div>
<div class="c" style="left:310px;top:315px;width:42px;height:18px;background:#88ffeb">73</div>
<div class="c" style="left:352px;top:315px;width:42px;height:18px;background:#88ffeb">73</div>
<div class="c" style="left:394px;top:315px;width:42px;height:18px;background:#88ffe8">74</div>
<div class="c" style="left:436px;top:315px;width:42px;height:18px;background:#88ffeb">73</div>
<div class="c" style="left:478px;top:315px;width:42px;height:18px;background:#89fff5">70</div>
<div class="c" style="left:520px;top:315px;width:42px;height:18px;background:#8bfbff">65</div>
<div class="c" style="left:562px;top:315px;width:42px;height:18px;background:#8cf0ff">61</div>
<div class="c" style="left:604px;top:315px;width:42px;height:18px;background:#8cf0ff">61</div>
<div class="c" style="left:646px;top:315px;width:42px;height:18px;background:#8cf3ff">62</div>
<div class="c" style="left:688px;top:315px;width:42px;height:18px;background:#8cf0ff">61</div>
<div class="c" style="left:730px;top:315px;width:42px;height:18px;background:#8cf0ff">61</div>
<div class="c" style="left:772px;top:315px;width:42px;height:18px;background:#8deeff">60</div>
<div class="c" style="left:814px;top:315px;width:42px;height:18px;background:#8de9ff">58</div>
<div class="c" style="left:856px;top:315px;width:42px;height:18px;background:#8ee6ff">57</div>
<div class="c" style="left:898px;top:315px;width:42px;height:18px;background:#8ee1ff">55</div>
<div class="c" style="left:940px;top:315px;width:42px;height:18px;background:#8fdcff">53</div>
<div class="c" style="left:982px;top:315px;width:42px;height:18px;background:#90d9ff">52</div>
<div class="c" style="left:16px;top:333px;width:42px;height:18px;background:#ffff00">18,6</div>
<div class="c" style="left:58px;top:333px;width:42px;height:18px;background:#e8ff80">139</div>
<div class="c" style="left:100px;top:333px;width:42px;height:18px;background:#e8ff80">139</div>
<div class="c" style="left:142px;top:333px;width:42px;height:18px;background:#9eff80">116</div>
<div class="c" style="left:184px;top:333px;width:42px;height:18px;background:#80ff85">105</div>
<div class="c" style="left:226px;top:333px;width:42px;height:18px;background:#81ff88">104</div>
<div class="c" style="left:268px;top:333px;width:42px;height:18px;background:#83ffa5">95</div>
<div class="c" style="left:310px;top:333px;width:42px;height:18px;background:#84ffb2">91</div>
<div class="c" style="left:352px;top:333px;width:42px;height:18px;background:#84ffb8">89</div>
<div class="c" style="left:394px;top:333px;width:42px;height:18px;background:#84ffb8">89</div>
<div class="c" style="left:436px;top:333px;width:42px;height:18px;background:#85ffbb">88</div>
<div class="c" style="left:478px;top:333px;width:42px;height:18px;background:#85ffc5">85</div>
<div class="c" style="left:520px;top:333px;width:42px;height:18px;background:#87ffde">77</div>
<div class="c" style="left:562px;top:333px;width:42px;height:18px;background:#88ffeb">73</div>
<div class="c" style="left:604px;top:333px;width:42px;height:18px;background:#88ffe8">74</div>
<div class="c" style="left:646px;top:333px;width:42px;height:18px;background:#88ffe8">74</div>
<div class="c" style="left:688px;top:333px;width:42px;height:18px;background:#88ffeb">73</div>
<div class="c" style="left:730px;top:333px;width:42px;height:18px;background:#88ffeb">73</div>
<div class="c" style="left:772px;top:333px;width:42px;height:18px;background:#89fff1">71</div>
<div class="c" style="left:814px;top:333px;width:42px;height:18px;background:#89fff8">69</div>
<div class="c" style="left:856px;top:333px;width:42px;height:18px;background:#8afffe">67</div>
<div class="c" style="left:898px;top:333px;width:42px;height:18px;background:#8bf8ff">64</div>
<div class="c" style="left:940px;top:333px;width:42px;height:18px;background:#8cf3ff">62</div>
<div class="c" style="left:982px;top:333px;width:42px;height:18px;background:#8deeff">60</div>
<div class="c" style="left:16px;top:351px;width:42px;height:18px;background:#ffff00">23,2</div>
<div class="c" style="left:58px;top:351px;width:42px;height:18px;background:#f1ff80">142</div>
<div class="c" style="left:100px;top:351px;width:42px;height:18px;background:#f1ff80">142</div>
<div class="c" style="left:142px;top:351px;width:42px;height:18px;background:#bbff80">125</div>
<div class="c" style="left:184px;top:351px;width:42px;height:18px;background:#9eff80">116</div>
<div class="c" style="left:226px;top:351px;width:42px;height:18px;background:#9eff80">116</div>
<div class="c" style="left:268px;top:351px;width:42px;height:18px;background:#82ff80">107</div>
<div class="c" style="left:310px;top:351px;width:42px;height:18px;background:#80ff85">105</div>
<div class="c" style="left:352px;top:351px;width:42px;height:18px;background:#81ff88">104</div>
<div class="c" style="left:394px;top:351px;width:42px;height:18px;background:#80ff85">105</div>
<div class="c" style="left:436px;top:351px;width:42px;height:18px;background:#81ff8b">103</div>
<div class="c" style="left:478px;top:351px;width:42px;height:18px;background:#82ff98">99</div>
<div class="c" style="left:520px;top:351px;width:42px;height:18px;background:#84ffb2">91</div>
<div class="c" style="left:562px;top:351px;width:42px;height:18px;background:#85ffc5">85</div>
<div class="c" style="left:604px;top:351px;width:42px;height:18px;background:#85ffc1">86</div>
<div class="c" style="left:646px;top:351px;width:42px;height:18px;background:#85ffbe">87</div>
<div class="c" style="left:688px;top:351px;width:42px;height:18px;background:#85ffc1">86</div>
<div class="c" style="left:730px;top:351px;width:42px;height:18px;background:#85ffc1">86</div>
<div class="c" style="left:772px;top:351px;width:42px;height:18px;background:#86ffc8">84</div>
<div class="c" style="left:814px;top:351px;width:42px;height:18px;background:#86ffce">82</div>
<div class="c" style="left:856px;top:351px;width:42px;height:18px;background:#87ffd5">80</div>
<div class="c" style="left:898px;top:351px;width:42px;height:18px;background:#87ffde">77</div>
<div class="c" style="left:940px;top:351px;width:42px;height:18px;background:#88ffe8">74</div>
<div class="c" style="left:982px;top:351px;width:42px;height:18px;background:#88ffeb">73</div>
<div class="c" style="left:16px;top:369px;width:42px;height:18px;background:#ffff00">27,7</div>
<div class="c" style="left:58px;top:369px;width:42px;height:18px;background:#fbff80">145</div>
<div class="c" style="left:100px;top:369px;width:42px;height:18px;background:#fbff80">145</div>
<div class="c" style="left:142px;top:369px;width:42px;height:18px;background:#c8ff80">129</div>
<div class="c" style="left:184px;top:369px;width:42px;height:18px;background:#bbff80">125</div>
<div class="c" style="left:226px;top:369px;width:42px;height:18px;background:#aeff80">121</div>
<div class="c" style="left:268px;top:369px;width:42px;height:18px;background:#a8ff80">119</div>
<div class="c" style="left:310px;top:369px;width:42px;height:18px;background:#a8ff80">119</div>
<div class="c" style="left:352px;top:369px;width:42px;height:18px;background:#aeff80">121</div>
<div class="c" style="left:394px;top:369px;width:42px;height:18px;background:#b5ff80">123</div>
<div class="c" style="left:436px;top:369px;width:42px;height:18px;background:#b2ff80">122</div>
<div class="c" style="left:478px;top:369px;width:42px;height:18px;background:#a2ff80">117</div>
<div class="c" style="left:520px;top:369px;width:42px;height:18px;background:#88ff80">109</div>
<div class="c" style="left:562px;top:369px;width:42px;height:18px;background:#82ff98">99</div>
<div class="c" style="left:604px;top:369px;width:42px;height:18px;background:#82ff9b">98</div>
<div class="c" style="left:646px;top:369px;width:42px;height:18px;background:#82ff95">100</div>
<div class="c" style="left:688px;top:369px;width:42px;height:18px;background:#82ff98">99</div>
<div class="c" style="left:730px;top:369px;width:42px;height:18px;background:#82ff9b">98</div>
<div class="c" style="left:772px;top:369px;width:42px;height:18px;background:#83ffa2">96</div>
<div class="c" style="left:814px;top:369px;width:42px;height:18px;background:#83ffa8">94</div>
<div class="c" style="left:856px;top:369px;width:42px;height:18px;background:#84ffb2">91</div>
<div class="c" style="left:898px;top:369px;width:42px;height:18px;background:#84ffb8">89</div>
<div class="c" style="left:940px;top:369px;width:42px;height:18px;background:#85ffc5">85</div>
<div class="c" style="left:982px;top:369px;width:42px;height:18px;background:#86ffcb">83</div>
<div class="c" style="left:16px;top:387px;width:42px;height:18px;background:#ffff00">36,7</div>
<div class="c" style="left:58px;top:387px;width:42px;height:18px;background:#feff80">146</div>
<div class="c" style="left:100px;top:387px;width:42px;height:18px;background:#feff80">146</div>
<div class="c" style="left:142px;top:387px;width:42px;height:18px;background:#d8ff80">134</div>
<div class="c" style="left:184px;top:387px;width:42px;height:18px;background:#cbff80">130</div>
<div class="c" style="left:226px;top:387px;width:42px;height:18px;background:#ceff80">131</div>
<div class="c" style="left:268px;top:387px;width:42px;height:18px;background:#cbff80">130</div>
<div class="c" style="left:310px;top:387px;width:42px;height:18px;background:#d1ff80">132</div>
<div class="c" style="left:352px;top:387px;width:42px;height:18px;background:#d8ff80">134</div>
<div class="c" style="left:394px;top:387px;width:42px;height:18px;background:#deff80">136</div>
<div class="c" style="left:436px;top:387px;width:42px;height:18px;background:#d8ff80">134</div>
<div class="c" style="left:478px;top:387px;width:42px;height:18px;background:#d1ff80">132</div>
<div class="c" style="left:520px;top:387px;width:42px;height:18px;background:#ceff80">131</div>
<div class="c" style="left:562px;top:387px;width:42px;height:18px;background:#bbff80">125</div>
<div class="c" style="left:604px;top:387px;width:42px;height:18px;background:#b5ff80">123</div>
<div class="c" style="left:646px;top:387px;width:42px;height:18px;background:#b5ff80">123</div>
<div class="c" style="left:688px;top:387px;width:42px;height:18px;background:#abff80">120</div>
<div class="c" style="left:730px;top:387px;width:42px;height:18px;background:#a5ff80">118</div>
<div class="c" style="left:772px;top:387px;width:42px;height:18px;background:#a2ff80">117</div>
<div class="c" style="left:814px;top:387px;width:42px;height:18px;background:#9eff80">116</div>
<div class="c" style="left:856px;top:387px;width:42px;height:18px;background:#98ff80">114</div>
<div class="c" style="left:898px;top:387px;width:42px;height:18px;background:#8bff80">110</div>
<div class="c" style="left:940px;top:387px;width:42px;height:18px;background:#80ff82">106</div>
<div class="c" style="left:982px;top:387px;width:42px;height:18px;background:#81ff8e">102</div>
<div class="c" style="left:16px;top:405px;width:42px;height:18px;background:#ffff00">45,8</div>
<div class="c" style="left:58px;top:405px;width:42px;height:18px;background:#fff47e">149</div>
<div class="c" style="left:100px;top:405px;width:42px;height:18px;background:#fff47e">149</div>
<div class="c" style="left:142px;top:405px;width:42px;height:18px;background:#e5ff80">138</div>
<div class="c" style="left:184px;top:405px;width:42px;height:18px;background:#d5ff80">133</div>
<div class="c" style="left:226px;top:405px;width:42px;height:18px;background:#ceff80">131</div>
<div class="c" style="left:268px;top:405px;width:42px;height:18px;background:#d1ff80">132</div>
<div class="c" style="left:310px;top:405px;width:42px;height:18px;background:#d1ff80">132</div>
<div class="c" style="left:352px;top:405px;width:42px;height:18px;background:#ebff80">140</div>
<div class="c" style="left:394px;top:405px;width:42px;height:18px;background:#f8ff80">144</div>
<div class="c" style="left:436px;top:405px;width:42px;height:18px;background:#fbff80">145</div>
<div class="c" style="left:478px;top:405px;width:42px;height:18px;background:#f8ff80">144</div>
<div class="c" style="left:520px;top:405px;width:42px;height:18px;background:#f8ff80">144</div>
<div class="c" style="left:562px;top:405px;width:42px;height:18px;background:#eeff80">141</div>
<div class="c" style="left:604px;top:405px;width:42px;height:18px;background:#f5ff80">143</div>
<div class="c" style="left:646px;top:405px;width:42px;height:18px;background:#feff80">146</div>
<div class="c" style="left:688px;top:405px;width:42px;height:18px;background:#fff47e">149</div>
<div class="c" style="left:730px;top:405px;width:42px;height:18px;background:#ffed7d">151</div>
<div class="c" style="left:772px;top:405px;width:42px;height:18px;background:#fff47e">149</div>
<div class="c" style="left:814px;top:405px;width:42px;height:18px;background:#fbff80">145</div>
<div class="c" style="left:856px;top:405px;width:42px;height:18px;background:#e8ff80">139</div>
<div class="c" style="left:898px;top:405px;width:42px;height:18px;background:#dbff80">135</div>
<div class="c" style="left:940px;top:405px;width:42px;height:18px;background:#ceff80">131</div>
<div class="c" style="left:982px;top:405px;width:42px;height:18px;background:#beff80">126</div>
<div class="c" style="left:16px;top:423px;width:42px;height:18px;background:#ffff00">54,7</div>
<div class="c" style="left:58px;top:423px;width:42px;height:18px;background:#ffc676">161</div>
<div class="c" style="left:100px;top:423px;width:42px;height:18px;background:#ffc676">161</div>
<div class="c" style="left:142px;top:423px;width:42px;height:18px;background:#f5ff80">143</div>
<div class="c" style="left:184px;top:423px;width:42px;height:18px;background:#dbff80">135</div>
<div class="c" style="left:226px;top:423px;width:42px;height:18px;background:#ceff80">131</div>
<div class="c" style="left:268px;top:423px;width:42px;height:18px;background:#d8ff80">134</div>
<div class="c" style="left:310px;top:423px;width:42px;height:18px;background:#dbff80">135</div>
<div class="c" style="left:352px;top:423px;width:42px;height:18px;background:#f5ff80">143</div>
<div class="c" style="left:394px;top:423px;width:42px;height:18px;background:#fff47e">149</div>
<div class="c" style="left:436px;top:423px;width:42px;height:18px;background:#ffed7d">151</div>
<div class="c" style="left:478px;top:423px;width:42px;height:18px;background:#ffed7d">151</div>
<div class="c" style="left:520px;top:423px;width:42px;height:18px;background:#fff17e">150</div>
<div class="c" style="left:562px;top:423px;width:42px;height:18px;background:#ffed7d">151</div>
<div class="c" style="left:604px;top:423px;width:42px;height:18px;background:#ffe17b">154</div>
<div class="c" style="left:646px;top:423px;width:42px;height:18px;background:#ffbf75">163</div>
<div class="c" style="left:688px;top:423px;width:42px;height:18px;background:#ffb373">166</div>
<div class="c" style="left:730px;top:423px;width:42px;height:18px;background:#ffb373">166</div>
<div class="c" style="left:772px;top:423px;width:42px;height:18px;background:#ffb774">165</div>
<div class="c" style="left:814px;top:423px;width:42px;height:18px;background:#ffc276">162</div>
<div class="c" style="left:856px;top:423px;width:42px;height:18px;background:#ffd679">157</div>
<div class="c" style="left:898px;top:423px;width:42px;height:18px;background:#ffd97a">156</div>
<div class="c" style="left:940px;top:423px;width:42px;height:18px;background:#ffed7d">151</div>
<div class="c" style="left:982px;top:423px;width:42px;height:18px;background:#fffc80">147</div>
<div class="c" style="left:16px;top:441px;width:42px;height:18px;background:#ffff00">63,7</div>
<div class="c" style="left:58px;top:441px;width:42px;height:18px;background:#ffc676">161</div>
<div class="c" style="left:100px;top:441px;width:42px;height:18px;background:#ffc676">161</div>
<div class="c" style="left:142px;top:441px;width:42px;height:18px;background:#fffc80">147</div>
<div class="c" style="left:184px;top:441px;width:42px;height:18px;background:#deff80">136</div>
<div class="c" style="left:226px;top:441px;width:42px;height:18px;background:#ceff80">131</div>
<div class="c" style="left:268px;top:441px;width:42px;height:18px;background:#d8ff80">134</div>
<div class="c" style="left:310px;top:441px;width:42px;height:18px;background:#d8ff80">134</div>
<div class="c" style="left:352px;top:441px;width:42px;height:18px;background:#e8ff80">139</div>
<div class="c" style="left:394px;top:441px;width:42px;height:18px;background:#fff17e">150</div>
<div class="c" style="left:436px;top:441px;width:42px;height:18px;background:#ffd97a">156</div>
<div class="c" style="left:478px;top:441px;width:42px;height:18px;background:#ffd679">157</div>
<div class="c" style="left:520px;top:441px;width:42px;height:18px;background:#ffc276">162</div>
<div class="c" style="left:562px;top:441px;width:42px;height:18px;background:#ffce78">159</div>
<div class="c" style="left:604px;top:441px;width:42px;height:18px;background:#ffc276">162</div>
<div class="c" style="left:646px;top:441px;width:42px;height:18px;background:#ff9c6f">172</div>
<div class="c" style="left:688px;top:441px;width:42px;height:18px;background:#ff6e67">184</div>
<div class="c" style="left:730px;top:441px;width:42px;height:18px;background:#ff7569">182</div>
<div class="c" style="left:772px;top:441px;width:42px;height:18px;background:#ff7569">182</div>
<div class="c" style="left:814px;top:441px;width:42px;height:18px;background:#ff816b">179</div>
<div class="c" style="left:856px;top:441px;width:42px;height:18px;background:#ff8c6d">176</div>
<div class="c" style="left:898px;top:441px;width:42px;height:18px;background:#ff906d">175</div>
<div class="c" style="left:940px;top:441px;width:42px;height:18px;background:#ffaf72">167</div>
<div class="c" style="left:982px;top:441px;width:42px;height:18px;background:#ffbb74">164</div>
<div class="c" style="left:16px;top:459px;width:42px;height:18px;background:#ffff00">81,9</div>
<div class="c" style="left:58px;top:459px;width:42px;height:18px;background:#ffc676">161</div>
<div class="c" style="left:100px;top:459px;width:42px;height:18px;background:#ffc676">161</div>
<div class="c" style="left:142px;top:459px;width:42px;height:18px;background:#fff47e">149</div>
<div class="c" style="left:184px;top:459px;width:42px;height:18px;background:#e1ff80">137</div>
<div class="c" style="left:226px;top:459px;width:42px;height:18px;background:#ceff80">131</div>
<div class="c" style="left:268px;top:459px;width:42px;height:18px;background:#d8ff80">134</div>
<div class="c" style="left:310px;top:459px;width:42px;height:18px;background:#d8ff80">134</div>
<div class="c" style="left:352px;top:459px;width:42px;height:18px;background:#e8ff80">139</div>
<div class="c" style="left:394px;top:459px;width:42px;height:18px;background:#ffed7d">151</div>
<div class="c" style="left:436px;top:459px;width:42px;height:18px;background:#ffd278">158</div>
<div class="c" style="left:478px;top:459px;width:42px;height:18px;background:#ffca77">160</div>
<div class="c" style="left:520px;top:459px;width:42px;height:18px;background:#ffb774">165</div>
<div class="c" style="left:562px;top:459px;width:42px;height:18px;background:#ffbf75">163</div>
<div class="c" style="left:604px;top:459px;width:42px;height:18px;background:#ffb373">166</div>
<div class="c" style="left:646px;top:459px;width:42px;height:18px;background:#ff8c6d">176</div>
<div class="c" style="left:688px;top:459px;width:42px;height:18px;background:#ff6666">186</div>
<div class="c" style="left:730px;top:459px;width:42px;height:18px;background:#ff6666">186</div>
<div class="c" style="left:772px;top:459px;width:42px;height:18px;background:#ff6666">186</div>
<div class="c" style="left:814px;top:459px;width:42px;height:18px;background:#ff6e67">184</div>
<div class="c" style="left:856px;top:459px;width:42px;height:18px;background:#ff7268">183</div>
<div class="c" style="left:898px;top:459px;width:42px;height:18px;background:#ff816b">179</div>
<div class="c" style="left:940px;top:459px;width:42px;height:18px;background:#ffa470">170</div>
<div class="c" style="left:982px;top:459px;width:42px;height:18px;background:#ffaf72">167</div>
<div class="c" style="left:16px;top:477px;width:42px;height:18px;background:#ffff00">100</div>
<div class="c" style="left:58px;top:477px;width:42px;height:18px;background:#ffc676">161</div>
<div class="c" style="left:100px;top:477px;width:42px;height:18px;background:#ffc676">161</div>
<div class="c" style="left:142px;top:477px;width:42px;height:18px;background:#ffe97c">152</div>
<div class="c" style="left:184px;top:477px;width:42px;height:18px;background:#e5ff80">138</div>
<div class="c" style="left:226px;top:477px;width:42px;height:18px;background:#ceff80">131</div>
<div class="c" style="left:268px;top:477px;width:42px;height:18px;background:#d8ff80">134</div>
<div class="c" style="left:310px;top:477px;width:42px;height:18px;background:#d8ff80">134</div>
<div class="c" style="left:352px;top:477px;width:42px;height:18px;background:#e8ff80">139</div>
<div class="c" style="left:394px;top:477px;width:42px;height:18px;background:#ffe97c">152</div>
<div class="c" style="left:436px;top:477px;width:42px;height:18px;background:#ffca77">160</div>
<div class="c" style="left:478px;top:477px;width:42px;height:18px;background:#ffc276">162</div>
<div class="c" style="left:520px;top:477px;width:42px;height:18px;background:#ffaf72">167</div>
<div class="c" style="left:562px;top:477px;width:42px;height:18px;background:#ffb774">165</div>
<div class="c" style="left:604px;top:477px;width:42px;height:18px;background:#ffab72">168</div>
<div class="c" style="left:646px;top:477px;width:42px;height:18px;background:#ff856b">178</div>
<div class="c" style="left:688px;top:477px;width:42px;height:18px;background:#ff6666">186</div>
<div class="c" style="left:730px;top:477px;width:42px;height:18px;background:#ff6666">186</div>
<div class="c" style="left:772px;top:477px;width:42px;height:18px;background:#ff6666">186</div>
<div class="c" style="left:814px;top:477px;width:42px;height:18px;background:#ff6e67">184</div>
<div class="c" style="left:856px;top:477px;width:42px;height:18px;background:#ff7268">183</div>
<div class="c" style="left:898px;top:477px;width:42px;height:18px;background:#ff816b">179</div>
<div class="c" style="left:940px;top:477px;width:42px;height:18px;background:#ffa470">170</div>
<div class="c" style="left:982px;top:477px;width:42px;height:18px;background:#ffaf72">167</div>
<div class="vlbl" style="left:9px;top:315px">Throttle (%)</div>
</div>
<div style="position:absolute;left:163px;top:512px;width:1019px;height:108px;background:#000"></div>
<div class="win" id="map2" style="left:577px;top:13px;width:620px;height:332px">
<div class="tb"><span class="tt">32920-17G00.bin -&nbsp; Map 2</span></div>
<div class="mb"><span style="left:6px">Table</span><span style="left:45px">Edit</span><span style="left:76px">View</span></div>
<div class="ct"></div><div class="lw"></div>
<div class="bb" style="left:13px;top:62px"><div class="bi"><svg class="ic" viewBox="0 0 29 29"><defs><linearGradient id="gb" x1="0" y1="0" x2="1" y2="0"><stop offset="0" stop-color="#084a94"/><stop offset=".5" stop-color="#1c7ccf"/><stop offset="1" stop-color="#084a94"/></linearGradient><filter id="sh" x="-30%" y="-30%" width="170%" height="170%"><feGaussianBlur stdDeviation="1.7"/></filter></defs><path d="M15.6 5.6 L27 16.6 L19.6 16.6 L19.6 26 L11.9 26 L11.9 16.6 L4.4 16.6 Z" fill="#000" opacity=".85" filter="url(#sh)"/><path d="M14.6 3.6 L25.7 14.6 L18.5 14.6 L18.5 24.2 L10.8 24.2 L10.8 14.6 L3.3 14.6 Z" fill="url(#gb)" stroke="#000" stroke-width="1" stroke-linejoin="round"/></svg></div></div>
<div class="bb" style="left:51px;top:62px"><div class="bi"><svg class="ic" viewBox="0 0 29 29"><path d="M11.6 6.4 L19.6 6.4 L19.6 15.6 L26.8 15.6 L15.6 27 L4.6 15.6 L11.6 15.6 Z" fill="#000" opacity=".85" filter="url(#sh)"/><path d="M10.6 4.6 L18.5 4.6 L18.5 13.8 L25.6 13.8 L14.4 25.2 L3.4 13.8 L10.6 13.8 Z" fill="url(#gb)" stroke="#000" stroke-width="1" stroke-linejoin="round"/></svg></div></div>
<div class="bb" style="left:149px;top:62px"><div class="bi"><svg class="ic" viewBox="0 0 29 29"><defs><linearGradient id="go" x1="0" y1="0" x2="1" y2="1"><stop offset="0" stop-color="#ffb020"/><stop offset=".5" stop-color="#ff9a08"/><stop offset="1" stop-color="#e08000"/></linearGradient></defs><path d="M12.15 4.95 L15.05 4.95 L15.05 6.85 L16.85 6.85 L16.85 8.75 L18.75 8.75 L18.75 10.75 L20.75 10.75 L20.75 12.65 L22.15 12.65 L22.15 14.35 L23.95 14.35 L23.95 16.55 L16.75 16.55 L16.75 25.55 L10.25 25.55 L10.25 16.55 L3.15 16.55 L3.15 14.35 L5.05 14.35 L5.05 12.65 L6.45 12.65 L6.45 10.75 L8.45 10.75 L8.45 8.75 L10.35 8.75 L10.35 6.85 L12.15 6.85 Z" transform="translate(1.9,2.4)" fill="#000" opacity=".85" filter="url(#sh)"/><path d="M12.15 4.95 L15.05 4.95 L15.05 6.85 L16.85 6.85 L16.85 8.75 L18.75 8.75 L18.75 10.75 L20.75 10.75 L20.75 12.65 L22.15 12.65 L22.15 14.35 L23.95 14.35 L23.95 16.55 L16.75 16.55 L16.75 25.55 L10.25 25.55 L10.25 16.55 L3.15 16.55 L3.15 14.35 L5.05 14.35 L5.05 12.65 L6.45 12.65 L6.45 10.75 L8.45 10.75 L8.45 8.75 L10.35 8.75 L10.35 6.85 L12.15 6.85 Z" fill="url(#go)" stroke="#0c0600" stroke-width="1.1" stroke-linejoin="miter"/></svg></div></div>
<div class="bb" style="left:187px;top:62px"><div class="bi"><svg class="ic" viewBox="0 0 29 29"><path d="M11.35 3.15 L17.85 3.15 L17.85 12.15 L24.95 12.15 L24.95 14.55 L22.75 14.55 L22.75 16.75 L20.55 16.75 L20.55 18.95 L18.65 18.95 L18.65 21.15 L15.65 21.15 L15.65 23.55 L13.25 23.55 L13.25 21.15 L11.05 21.15 L11.05 18.95 L8.85 18.95 L8.85 16.75 L6.65 16.75 L6.65 14.55 L3.95 14.55 L3.95 12.15 L11.35 12.15 Z" transform="translate(1.9,2.4)" fill="#000" opacity=".85" filter="url(#sh)"/><path d="M11.35 3.15 L17.85 3.15 L17.85 12.15 L24.95 12.15 L24.95 14.55 L22.75 14.55 L22.75 16.75 L20.55 16.75 L20.55 18.95 L18.65 18.95 L18.65 21.15 L15.65 21.15 L15.65 23.55 L13.25 23.55 L13.25 21.15 L11.05 21.15 L11.05 18.95 L8.85 18.95 L8.85 16.75 L6.65 16.75 L6.65 14.55 L3.95 14.55 L3.95 12.15 L11.35 12.15 Z" fill="url(#go)" stroke="#0c0600" stroke-width="1.1" stroke-linejoin="miter"/></svg></div></div>
<div class="inp" style="left:89px;top:67px">1</div>
<div class="inp" style="left:225px;top:67px">10</div>
<div class="inp" style="left:285px;top:67px"></div>
<div class="sb" style="left:335px;top:67px;width:33px"><div class="si">Set</div></div>
<div class="sb" style="left:373px;top:67px;width:33px"><div class="si" style="letter-spacing:-.5px">Mul</div></div>
<div class="bb" style="left:416px;top:62px;background:none;border-color:#a0a0a0"><span class="d3">3D</span></div>
<div class="c" style="left:58px;top:135px;width:42px;height:18px;background:#ffff00">-20</div>
<div class="c" style="left:100px;top:135px;width:42px;height:18px;background:#ffff00">-10</div>
<div class="c" style="left:142px;top:135px;width:42px;height:18px;background:#ffff00">0</div>
<div class="c" style="left:184px;top:135px;width:42px;height:18px;background:#ffff00">10</div>
<div class="c" style="left:226px;top:135px;width:42px;height:18px;background:#ffff00">20</div>
<div class="c" style="left:268px;top:135px;width:42px;height:18px;background:#ffff00">30</div>
<div class="c" style="left:310px;top:135px;width:42px;height:18px;background:#ffff00">40</div>
<div class="c" style="left:352px;top:135px;width:42px;height:18px;background:#ffff00">50</div>
<div class="c" style="left:394px;top:135px;width:42px;height:18px;background:#ffff00">60</div>
<div class="c" style="left:436px;top:135px;width:42px;height:18px;background:#ffff00">70</div>
<div class="c" style="left:478px;top:135px;width:42px;height:18px;background:#ffff00">80</div>
<div class="c" style="left:520px;top:135px;width:42px;height:18px;background:#ffff00">90</div>
<div class="c" style="left:562px;top:135px;width:42px;height:18px;background:#ffff00">100</div>
<div class="c" style="left:16px;top:153px;width:42px;height:18px;background:#ffff00">801</div>
<div class="c" style="left:58px;top:153px;width:42px;height:18px;background:#ff6666">140</div>
<div class="c" style="left:100px;top:153px;width:42px;height:18px;background:#ff6666">140</div>
<div class="c" style="left:142px;top:153px;width:42px;height:18px;background:#ff6666">140</div>
<div class="c" style="left:184px;top:153px;width:42px;height:18px;background:#ff9a6f">134</div>
<div class="c" style="left:226px;top:153px;width:42px;height:18px;background:#ffe07b">126</div>
<div class="c" style="left:268px;top:153px;width:42px;height:18px;background:#d0ff80">116</div>
<div class="c" style="left:310px;top:153px;width:42px;height:18px;background:#8fff80">107</div>
<div class="c" style="left:352px;top:153px;width:42px;height:18px;background:#83ffa4">100</div>
<div class="c" style="left:394px;top:153px;width:42px;height:18px;background:#83ffa4">100</div>
<div class="c" style="left:436px;top:153px;width:42px;height:18px;background:#83ffa4">100</div>
<div class="c" style="left:478px;top:153px;width:42px;height:18px;background:#83ffa4">100</div>
<div class="c" style="left:520px;top:153px;width:42px;height:18px;background:#83ffa4">100</div>
<div class="c" style="left:562px;top:153px;width:42px;height:18px;background:#83ffa4">100</div>
<div class="c" style="left:16px;top:171px;width:42px;height:18px;background:#ffff00">898</div>
<div class="c" style="left:58px;top:171px;width:42px;height:18px;background:#ff6666">140</div>
<div class="c" style="left:100px;top:171px;width:42px;height:18px;background:#ff6666">140</div>
<div class="c" style="left:142px;top:171px;width:42px;height:18px;background:#ff6666">140</div>
<div class="c" style="left:184px;top:171px;width:42px;height:18px;background:#ff9a6f">134</div>
<div class="c" style="left:226px;top:171px;width:42px;height:18px;background:#ffe07b">126</div>
<div class="c" style="left:268px;top:171px;width:42px;height:18px;background:#d0ff80">116</div>
<div class="c" style="left:310px;top:171px;width:42px;height:18px;background:#8fff80">107</div>
<div class="c" style="left:352px;top:171px;width:42px;height:18px;background:#83ffa4">100</div>
<div class="c" style="left:394px;top:171px;width:42px;height:18px;background:#83ffa4">100</div>
<div class="c" style="left:436px;top:171px;width:42px;height:18px;background:#83ffa4">100</div>
<div class="c" style="left:478px;top:171px;width:42px;height:18px;background:#83ffa4">100</div>
<div class="c" style="left:520px;top:171px;width:42px;height:18px;background:#83ffa4">100</div>
<div class="c" style="left:562px;top:171px;width:42px;height:18px;background:#83ffa4">100</div>
<div class="c" style="left:16px;top:189px;width:42px;height:18px;background:#ffff00">1000</div>
<div class="c" style="left:58px;top:189px;width:42px;height:18px;background:#ff6666">140</div>
<div class="c" style="left:100px;top:189px;width:42px;height:18px;background:#ff6666">140</div>
<div class="c" style="left:142px;top:189px;width:42px;height:18px;background:#ff6666">140</div>
<div class="c" style="left:184px;top:189px;width:42px;height:18px;background:#ff9a6f">134</div>
<div class="c" style="left:226px;top:189px;width:42px;height:18px;background:#ffe07b">126</div>
<div class="c" style="left:268px;top:189px;width:42px;height:18px;background:#d0ff80">116</div>
<div class="c" style="left:310px;top:189px;width:42px;height:18px;background:#8fff80">107</div>
<div class="c" style="left:352px;top:189px;width:42px;height:18px;background:#85ffc1">96</div>
<div class="c" style="left:394px;top:189px;width:42px;height:18px;background:#85ffc1">96</div>
<div class="c" style="left:436px;top:189px;width:42px;height:18px;background:#85ffc1">96</div>
<div class="c" style="left:478px;top:189px;width:42px;height:18px;background:#85ffc1">96</div>
<div class="c" style="left:520px;top:189px;width:42px;height:18px;background:#85ffc1">96</div>
<div class="c" style="left:562px;top:189px;width:42px;height:18px;background:#85ffc1">96</div>
<div class="c" style="left:16px;top:207px;width:42px;height:18px;background:#ffff00">1102</div>
<div class="c" style="left:58px;top:207px;width:42px;height:18px;background:#ff6666">140</div>
<div class="c" style="left:100px;top:207px;width:42px;height:18px;background:#ff6666">140</div>
<div class="c" style="left:142px;top:207px;width:42px;height:18px;background:#ff6666">140</div>
<div class="c" style="left:184px;top:207px;width:42px;height:18px;background:#ff9a6f">134</div>
<div class="c" style="left:226px;top:207px;width:42px;height:18px;background:#ffe07b">126</div>
<div class="c" style="left:268px;top:207px;width:42px;height:18px;background:#d0ff80">116</div>
<div class="c" style="left:310px;top:207px;width:42px;height:18px;background:#8fff80">107</div>
<div class="c" style="left:352px;top:207px;width:42px;height:18px;background:#85ffc1">96</div>
<div class="c" style="left:394px;top:207px;width:42px;height:18px;background:#8bf6ff">86</div>
<div class="c" style="left:436px;top:207px;width:42px;height:18px;background:#8bf6ff">86</div>
<div class="c" style="left:478px;top:207px;width:42px;height:18px;background:#8bf6ff">86</div>
<div class="c" style="left:520px;top:207px;width:42px;height:18px;background:#8bf6ff">86</div>
<div class="c" style="left:562px;top:207px;width:42px;height:18px;background:#8bf6ff">86</div>
<div class="c" style="left:16px;top:225px;width:42px;height:18px;background:#ffff00">1199</div>
<div class="c" style="left:58px;top:225px;width:42px;height:18px;background:#ff6666">140</div>
<div class="c" style="left:100px;top:225px;width:42px;height:18px;background:#ff6666">140</div>
<div class="c" style="left:142px;top:225px;width:42px;height:18px;background:#ff6666">140</div>
<div class="c" style="left:184px;top:225px;width:42px;height:18px;background:#ff9a6f">134</div>
<div class="c" style="left:226px;top:225px;width:42px;height:18px;background:#ffe07b">126</div>
<div class="c" style="left:268px;top:225px;width:42px;height:18px;background:#d0ff80">116</div>
<div class="c" style="left:310px;top:225px;width:42px;height:18px;background:#8fff80">107</div>
<div class="c" style="left:352px;top:225px;width:42px;height:18px;background:#85ffc1">96</div>
<div class="c" style="left:394px;top:225px;width:42px;height:18px;background:#8bf6ff">86</div>
<div class="c" style="left:436px;top:225px;width:42px;height:18px;background:#90d3ff">80</div>
<div class="c" style="left:478px;top:225px;width:42px;height:18px;background:#90d3ff">80</div>
<div class="c" style="left:520px;top:225px;width:42px;height:18px;background:#90d3ff">80</div>
<div class="c" style="left:562px;top:225px;width:42px;height:18px;background:#90d3ff">80</div>
<div class="c" style="left:16px;top:243px;width:42px;height:18px;background:#ffff00">1301</div>
<div class="c" style="left:58px;top:243px;width:42px;height:18px;background:#ff6666">140</div>
<div class="c" style="left:100px;top:243px;width:42px;height:18px;background:#ff6666">140</div>
<div class="c" style="left:142px;top:243px;width:42px;height:18px;background:#ff6666">140</div>
<div class="c" style="left:184px;top:243px;width:42px;height:18px;background:#ff9a6f">134</div>
<div class="c" style="left:226px;top:243px;width:42px;height:18px;background:#ffe07b">126</div>
<div class="c" style="left:268px;top:243px;width:42px;height:18px;background:#d0ff80">116</div>
<div class="c" style="left:310px;top:243px;width:42px;height:18px;background:#8fff80">107</div>
<div class="c" style="left:352px;top:243px;width:42px;height:18px;background:#85ffc1">96</div>
<div class="c" style="left:394px;top:243px;width:42px;height:18px;background:#8bf6ff">86</div>
<div class="c" style="left:436px;top:243px;width:42px;height:18px;background:#95b6ff">75</div>
<div class="c" style="left:478px;top:243px;width:42px;height:18px;background:#9999ff">70</div>
<div class="c" style="left:520px;top:243px;width:42px;height:18px;background:#9999ff">70</div>
<div class="c" style="left:562px;top:243px;width:42px;height:18px;background:#9999ff">70</div>
<div class="c" style="left:16px;top:261px;width:42px;height:18px;background:#ffff00">1398</div>
<div class="c" style="left:58px;top:261px;width:42px;height:18px;background:#ff6666">140</div>
<div class="c" style="left:100px;top:261px;width:42px;height:18px;background:#ff6666">140</div>
<div class="c" style="left:142px;top:261px;width:42px;height:18px;background:#ff6666">140</div>
<div class="c" style="left:184px;top:261px;width:42px;height:18px;background:#ff9a6f">134</div>
<div class="c" style="left:226px;top:261px;width:42px;height:18px;background:#ffe07b">126</div>
<div class="c" style="left:268px;top:261px;width:42px;height:18px;background:#d0ff80">116</div>
<div class="c" style="left:310px;top:261px;width:42px;height:18px;background:#8fff80">107</div>
<div class="c" style="left:352px;top:261px;width:42px;height:18px;background:#85ffc1">96</div>
<div class="c" style="left:394px;top:261px;width:42px;height:18px;background:#8bf6ff">86</div>
<div class="c" style="left:436px;top:261px;width:42px;height:18px;background:#95b6ff">75</div>
<div class="c" style="left:478px;top:261px;width:42px;height:18px;background:#9999ff">70</div>
<div class="c" style="left:520px;top:261px;width:42px;height:18px;background:#9999ff">70</div>
<div class="c" style="left:562px;top:261px;width:42px;height:18px;background:#9999ff">70</div>
<div class="c" style="left:16px;top:279px;width:42px;height:18px;background:#ffff00">1500</div>
<div class="c" style="left:58px;top:279px;width:42px;height:18px;background:#ff6666">140</div>
<div class="c" style="left:100px;top:279px;width:42px;height:18px;background:#ff6666">140</div>
<div class="c" style="left:142px;top:279px;width:42px;height:18px;background:#ff6666">140</div>
<div class="c" style="left:184px;top:279px;width:42px;height:18px;background:#ff9a6f">134</div>
<div class="c" style="left:226px;top:279px;width:42px;height:18px;background:#ffe07b">126</div>
<div class="c" style="left:268px;top:279px;width:42px;height:18px;background:#d0ff80">116</div>
<div class="c" style="left:310px;top:279px;width:42px;height:18px;background:#8fff80">107</div>
<div class="c" style="left:352px;top:279px;width:42px;height:18px;background:#85ffc1">96</div>
<div class="c" style="left:394px;top:279px;width:42px;height:18px;background:#8bf6ff">86</div>
<div class="c" style="left:436px;top:279px;width:42px;height:18px;background:#95b6ff">75</div>
<div class="c" style="left:478px;top:279px;width:42px;height:18px;background:#9999ff">70</div>
<div class="c" style="left:520px;top:279px;width:42px;height:18px;background:#9999ff">70</div>
<div class="c" style="left:562px;top:279px;width:42px;height:18px;background:#9999ff">70</div>
<div class="c" style="left:16px;top:297px;width:42px;height:18px;background:#ffff00">1602</div>
<div class="c" style="left:58px;top:297px;width:42px;height:18px;background:#ff6666">140</div>
<div class="c" style="left:100px;top:297px;width:42px;height:18px;background:#ff6666">140</div>
<div class="c" style="left:142px;top:297px;width:42px;height:18px;background:#ff6666">140</div>
<div class="c" style="left:184px;top:297px;width:42px;height:18px;background:#ff9a6f">134</div>
<div class="c" style="left:226px;top:297px;width:42px;height:18px;background:#ffe07b">126</div>
<div class="c" style="left:268px;top:297px;width:42px;height:18px;background:#d0ff80">116</div>
<div class="c" style="left:310px;top:297px;width:42px;height:18px;background:#8fff80">107</div>
<div class="c" style="left:352px;top:297px;width:42px;height:18px;background:#85ffc1">96</div>
<div class="c" style="left:394px;top:297px;width:42px;height:18px;background:#8bf6ff">86</div>
<div class="c" style="left:436px;top:297px;width:42px;height:18px;background:#95b6ff">75</div>
<div class="c" style="left:478px;top:297px;width:42px;height:18px;background:#9999ff">70</div>
<div class="c" style="left:520px;top:297px;width:42px;height:18px;background:#9999ff">70</div>
<div class="c" style="left:562px;top:297px;width:42px;height:18px;background:#9999ff">70</div>
<div class="vlbl" style="left:9px;top:225px">Engine Speed (rpm)</div>
<div class="lbl" style="left:246px;top:107px;width:200px;letter-spacing:0">Map 2</div><div class="lbl" style="left:245px;top:121px;width:200px;letter-spacing:0">Water Temp (C)</div><div class="lbl" style="left:245px;top:317px;width:200px">unknown</div>
</div>
<div class="win act" id="rpm" style="left:347px;top:450px;width:597px;height:180px">
<div class="tb"><span class="tt">32920-17G00.bin - RPM&nbsp; (Type 4)</span><div class="close"><svg viewBox="0 0 21 21" width="21" height="21"><path d="M5.9 5.4 L15.1 15.4 M15.1 5.4 L5.9 15.4" stroke="#fff" stroke-width="2.4" stroke-linecap="round"/></svg></div></div>
<div class="mb"><span style="left:6px">Table</span><span style="left:45px">Edit</span><span style="left:76px">View</span></div>
<div class="ct"></div><div class="lw"></div>
<div class="bb" style="left:13px;top:62px"><div class="bi"><svg class="ic" viewBox="0 0 29 29"><defs><linearGradient id="gb" x1="0" y1="0" x2="1" y2="0"><stop offset="0" stop-color="#084a94"/><stop offset=".5" stop-color="#1c7ccf"/><stop offset="1" stop-color="#084a94"/></linearGradient><filter id="sh" x="-30%" y="-30%" width="170%" height="170%"><feGaussianBlur stdDeviation="1.7"/></filter></defs><path d="M15.6 5.6 L27 16.6 L19.6 16.6 L19.6 26 L11.9 26 L11.9 16.6 L4.4 16.6 Z" fill="#000" opacity=".85" filter="url(#sh)"/><path d="M14.6 3.6 L25.7 14.6 L18.5 14.6 L18.5 24.2 L10.8 24.2 L10.8 14.6 L3.3 14.6 Z" fill="url(#gb)" stroke="#000" stroke-width="1" stroke-linejoin="round"/></svg></div></div>
<div class="bb" style="left:51px;top:62px"><div class="bi"><svg class="ic" viewBox="0 0 29 29"><path d="M11.6 6.4 L19.6 6.4 L19.6 15.6 L26.8 15.6 L15.6 27 L4.6 15.6 L11.6 15.6 Z" fill="#000" opacity=".85" filter="url(#sh)"/><path d="M10.6 4.6 L18.5 4.6 L18.5 13.8 L25.6 13.8 L14.4 25.2 L3.4 13.8 L10.6 13.8 Z" fill="url(#gb)" stroke="#000" stroke-width="1" stroke-linejoin="round"/></svg></div></div>
<div class="bb" style="left:149px;top:62px"><div class="bi"><svg class="ic" viewBox="0 0 29 29"><defs><linearGradient id="go" x1="0" y1="0" x2="1" y2="1"><stop offset="0" stop-color="#ffb020"/><stop offset=".5" stop-color="#ff9a08"/><stop offset="1" stop-color="#e08000"/></linearGradient></defs><path d="M12.15 4.95 L15.05 4.95 L15.05 6.85 L16.85 6.85 L16.85 8.75 L18.75 8.75 L18.75 10.75 L20.75 10.75 L20.75 12.65 L22.15 12.65 L22.15 14.35 L23.95 14.35 L23.95 16.55 L16.75 16.55 L16.75 25.55 L10.25 25.55 L10.25 16.55 L3.15 16.55 L3.15 14.35 L5.05 14.35 L5.05 12.65 L6.45 12.65 L6.45 10.75 L8.45 10.75 L8.45 8.75 L10.35 8.75 L10.35 6.85 L12.15 6.85 Z" transform="translate(1.9,2.4)" fill="#000" opacity=".85" filter="url(#sh)"/><path d="M12.15 4.95 L15.05 4.95 L15.05 6.85 L16.85 6.85 L16.85 8.75 L18.75 8.75 L18.75 10.75 L20.75 10.75 L20.75 12.65 L22.15 12.65 L22.15 14.35 L23.95 14.35 L23.95 16.55 L16.75 16.55 L16.75 25.55 L10.25 25.55 L10.25 16.55 L3.15 16.55 L3.15 14.35 L5.05 14.35 L5.05 12.65 L6.45 12.65 L6.45 10.75 L8.45 10.75 L8.45 8.75 L10.35 8.75 L10.35 6.85 L12.15 6.85 Z" fill="url(#go)" stroke="#0c0600" stroke-width="1.1" stroke-linejoin="miter"/></svg></div></div>
<div class="bb" style="left:187px;top:62px"><div class="bi"><svg class="ic" viewBox="0 0 29 29"><path d="M11.35 3.15 L17.85 3.15 L17.85 12.15 L24.95 12.15 L24.95 14.55 L22.75 14.55 L22.75 16.75 L20.55 16.75 L20.55 18.95 L18.65 18.95 L18.65 21.15 L15.65 21.15 L15.65 23.55 L13.25 23.55 L13.25 21.15 L11.05 21.15 L11.05 18.95 L8.85 18.95 L8.85 16.75 L6.65 16.75 L6.65 14.55 L3.95 14.55 L3.95 12.15 L11.35 12.15 Z" transform="translate(1.9,2.4)" fill="#000" opacity=".85" filter="url(#sh)"/><path d="M11.35 3.15 L17.85 3.15 L17.85 12.15 L24.95 12.15 L24.95 14.55 L22.75 14.55 L22.75 16.75 L20.55 16.75 L20.55 18.95 L18.65 18.95 L18.65 21.15 L15.65 21.15 L15.65 23.55 L13.25 23.55 L13.25 21.15 L11.05 21.15 L11.05 18.95 L8.85 18.95 L8.85 16.75 L6.65 16.75 L6.65 14.55 L3.95 14.55 L3.95 12.15 L11.35 12.15 Z" fill="url(#go)" stroke="#0c0600" stroke-width="1.1" stroke-linejoin="miter"/></svg></div></div>
<div class="inp" style="left:89px;top:67px">10</div>
<div class="inp" style="left:225px;top:67px">100</div>
<div class="inp" style="left:285px;top:67px"></div>
<div class="sb" style="left:335px;top:67px;width:33px"><div class="si">Set</div></div>
<div class="sb" style="left:373px;top:67px;width:33px"><div class="si" style="letter-spacing:-.5px">Mul</div></div>
<div class="cb" style="left:425px;top:72px"></div><div class="lbl" style="left:441px;top:72px;font-size:11px;text-align:left">Overlay Log</div><div class="sb" style="left:509px;top:67px;width:75px"><div class="si">Clear Overlay</div></div>
<div class="lbl" style="left:197px;top:107px;width:200px">Limiter&nbsp; Values</div>
<div class="c" style="left:2px;top:120px;width:148px;height:19px;background:#ffff00">1</div>
<div class="c" style="left:150px;top:120px;width:148px;height:19px;background:#ffff00">2</div>
<div class="c" style="left:298px;top:120px;width:148px;height:19px;background:#ffff00">3</div>
<div class="c" style="left:446px;top:120px;width:148px;height:19px;background:#ffff00">4</div>
<div class="c" style="left:2px;top:139px;width:148px;height:19px;background:#ff6666">11300</div>
<div class="c" style="left:150px;top:139px;width:148px;height:19px;background:#ffe77c">11260</div>
<div class="c" style="left:298px;top:139px;width:148px;height:19px;background:#85ffc3">11180</div>
<div class="c" style="left:446px;top:139px;width:148px;height:19px;background:#9999ff">11110</div>
<div class="lbl" style="left:197px;top:158px;width:200px">RPM</div>
</div>
</body></html>
